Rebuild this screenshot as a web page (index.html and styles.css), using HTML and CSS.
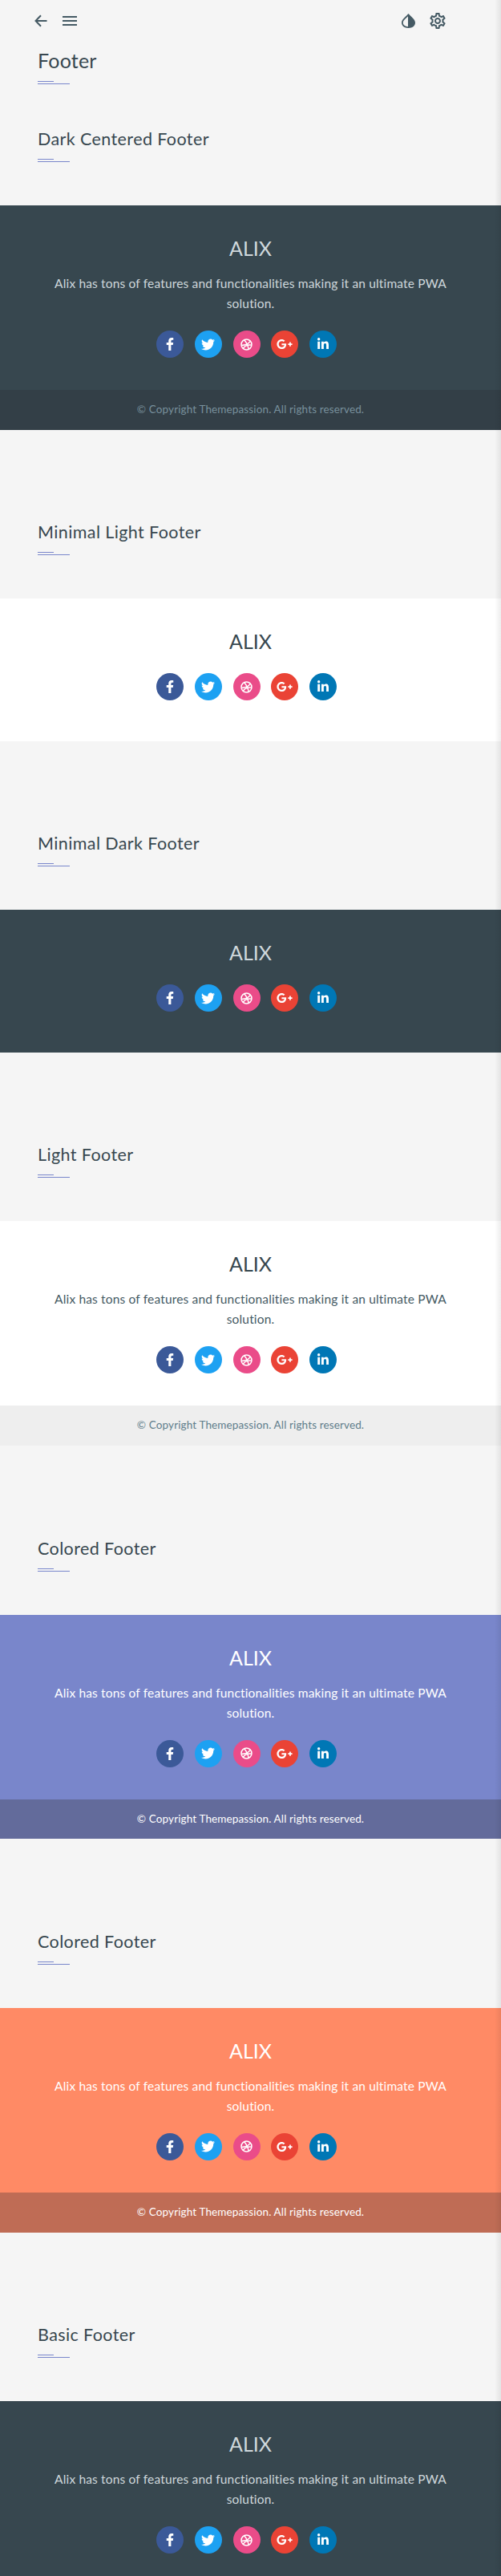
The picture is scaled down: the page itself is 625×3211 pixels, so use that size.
FILE: index.html
```html
<!DOCTYPE html>
<html lang="en">
<head>
<meta charset="utf-8">
<title>Footer</title>
<link rel="stylesheet" href="styles.css">
</head>
<body>
<svg class="defs" aria-hidden="true">
  <symbol id="i-fb" viewBox="0 0 320 512"><path d="M279.14 288l14.22-92.66h-88.91v-60.13c0-25.35 12.42-50.06 52.24-50.06h40.42V6.26S260.43 0 225.36 0c-73.22 0-121.08 44.38-121.08 124.72v70.62H22.89V288h81.39v224h100.17V288z"/></symbol>
  <symbol id="i-tw" viewBox="0 0 512 512"><path d="M459.37 151.716c.325 4.548.325 9.097.325 13.645 0 138.72-105.583 298.558-298.558 298.558-59.452 0-114.68-17.219-161.137-47.106 8.447.974 16.568 1.299 25.34 1.299 49.055 0 94.213-16.568 130.274-44.832-46.132-.975-84.792-31.188-98.112-72.772 6.498.974 12.995 1.624 19.818 1.624 9.421 0 18.843-1.3 27.614-3.573-48.081-9.747-84.143-51.98-84.143-102.985v-1.299c13.969 7.797 30.214 12.67 47.431 13.319-28.264-18.843-46.781-51.005-46.781-87.391 0-19.492 5.197-37.36 14.294-52.954 51.655 63.675 129.3 105.258 216.365 109.807-1.624-7.797-2.599-15.918-2.599-24.04 0-57.828 46.782-104.934 104.934-104.934 30.213 0 57.502 12.67 76.67 33.137 23.715-4.548 46.456-13.32 66.599-25.34-7.798 24.366-24.366 44.833-46.132 57.827 21.117-2.273 41.584-8.122 60.426-16.243-14.292 20.791-32.161 39.308-52.628 54.253z"/></symbol>
  <symbol id="i-dr" viewBox="0 0 24 24"><g fill="none" stroke="currentColor" stroke-width="2.4"><circle cx="12" cy="12" r="10.4"/><path d="M7.6 2.8c4 4.600 7.600 11.600 9 19.600"/><path d="M2 13.500c7.500 0 14-2.600 17.800-8.400"/><path d="M5 20c3-5 8.500-8.200 17.200-7"/></g></symbol>
  <symbol id="i-gp" viewBox="0 0 640 512"><path d="M386.061 228.496c1.834 9.692 3.143 19.384 3.143 31.956C389.204 370.205 315.599 448 204.8 448c-106.084 0-192-85.915-192-192s85.916-192 192-192c51.864 0 95.083 18.859 128.611 50.292l-52.126 50.03c-14.145-13.621-39.028-29.599-76.485-29.599-65.484 0-118.92 54.221-118.92 121.277 0 67.056 53.436 121.277 118.92 121.277 75.961 0 104.513-54.745 108.965-82.773H204.8v-66.009h181.261zm185.406 6.437V179.2h-56.001v55.733h-55.733v56.001h55.733v55.733h56.001v-55.733H627.2v-56.001h-55.733z"/></symbol>
  <symbol id="i-in" viewBox="0 0 448 512"><path d="M100.28 448H7.4V148.9h92.88zM53.79 108.1C24.09 108.1 0 83.5 0 53.8a53.79 53.79 0 0 1 107.58 0c0 29.7-24.1 54.3-53.79 54.3zM447.9 448h-92.68V302.4c0-34.7-.7-79.2-48.29-79.2-48.29 0-55.69 37.7-55.69 76.7V448h-92.78V148.9h89.08v40.8h1.3c12.4-23.5 42.69-48.3 87.88-48.3 94 0 111.28 61.9 111.28 142.3V448z"/></symbol>
</svg>

<div class="page">
  <nav class="topbar">
    <div class="topbar-group">
      <svg class="nav-icon nav-back" viewBox="0 0 16 16"><path d="M15.500 8H1.500M8 1.200L1.500 8 8 14.800"/></svg>
      <svg class="nav-icon nav-menu" viewBox="0 0 18 12"><path d="M0 1h18M0 6h18M0 11h18"/></svg>
    </div>
    <div class="topbar-group topbar-right">
      <svg class="nav-drop" viewBox="0 0 17 18"><path fill-rule="evenodd" d="M8.500 0C5.500 3.500 0 7 0 11.500 0 15.200 3.800 18 8.500 18S17 15.200 17 11.500C17 7 11.500 3.500 8.500 0zM8 3.200C6 5.600 1.800 8 1.800 11.500c0 2.600 2.700 4.600 6.200 4.700z"/></svg>
      <svg class="nav-gear" viewBox="2 2 20 20"><path d="M19.430 12.980c.04-.32.07-.64.07-.98 0-.34-.03-.66-.07-.98l2.110-1.650c.19-.15.24-.42.12-.64l-2-3.460c-.09-.16-.26-.25-.44-.25-.06 0-.12.01-.17.03l-2.490 1c-.52-.4-1.080-.73-1.690-.98l-.38-2.650C14.460 2.180 14.250 2 14 2h-4c-.25 0-.46.18-.49.42l-.38 2.650c-.61.25-1.170.59-1.690.98l-2.490-1c-.06-.02-.12-.03-.18-.03-.17 0-.34.09-.43.25l-2 3.460c-.13.22-.07.49.12.64l2.110 1.650c-.04.32-.07.65-.07.98 0 .33.03.66.07.98l-2.110 1.650c-.19.15-.24.42-.12.64l2 3.460c.09.16.26.25.44.25.06 0 .12-.01.17-.03l2.490-1c.52.4 1.080.73 1.690.98l.38 2.650c.03.24.24.42.49.42h4c.25 0 .46-.18.49-.42l.38-2.650c.61-.25 1.170-.59 1.690-.98l2.490 1c.06.02.12.03.18.03.17 0 .34-.09.43-.25l2-3.460c.12-.22.07-.49-.12-.64l-2.110-1.650zm-1.980-1.710c.04.31.05.52.05.73 0 .21-.02.43-.05.73l-.14 1.130.89.7 1.080.84-.7 1.210-1.270-.51-1.040-.42-.9.68c-.43.32-.84.56-1.250.73l-1.060.43-.16 1.130-.2 1.350h-1.400l-.19-1.350-.16-1.130-1.060-.43c-.43-.18-.83-.41-1.230-.71l-.91-.7-1.060.43-1.270.51-.7-1.210 1.080-.84.89-.7-.14-1.130c-.03-.31-.05-.54-.05-.74s.02-.43.05-.73l.14-1.130-.89-.7-1.080-.84.7-1.210 1.270.51 1.040.42.9-.68c.43-.32.84-.56 1.250-.73l1.060-.43.16-1.130.2-1.350h1.390l.19 1.350.16 1.130 1.060.43c.43.18.83.41 1.230.71l.91.7 1.060-.43 1.270-.51.7 1.210-1.070.85-.89.7.14 1.130zM12 8c-2.210 0-4 1.790-4 4s1.790 4 4 4 4-1.790 4-4-1.790-4-4-4zm0 6c-1.100 0-2-.9-2-2s.9-2 2-2 2 .9 2 2-.9 2-2 2z"/></svg>
    </div>
  </nav>

  <header class="page-title">
    <h1>Footer</h1>
    <div class="rule"></div>
  </header>

  <section class="demo-head demo-head-first">
    <h2>Dark Centered Footer</h2>
    <div class="rule"></div>
  </section>
  <footer class="foot foot-dark">
    <div class="foot-main">
      <h3>ALIX</h3>
      <p>Alix has tons of features and functionalities making it an ultimate PWA solution.</p>
      <div class="social">
        <a class="soc soc-fb"><svg class="g-fb"><use href="#i-fb"/></svg></a>
        <a class="soc soc-tw"><svg class="g-tw"><use href="#i-tw"/></svg></a>
        <a class="soc soc-dr"><svg class="g-dr"><use href="#i-dr"/></svg></a>
        <a class="soc soc-gp"><svg class="g-gp"><use href="#i-gp"/></svg></a>
        <a class="soc soc-in"><svg class="g-in"><use href="#i-in"/></svg></a>
      </div>
    </div>
    <div class="foot-bar">© Copyright Themepassion. All rights reserved.</div>
  </footer>

  <section class="demo-head">
    <h2>Minimal Light Footer</h2>
    <div class="rule"></div>
  </section>
  <footer class="foot foot-light foot-min">
    <div class="foot-main">
      <h3>ALIX</h3>
      <div class="social">
        <a class="soc soc-fb"><svg class="g-fb"><use href="#i-fb"/></svg></a>
        <a class="soc soc-tw"><svg class="g-tw"><use href="#i-tw"/></svg></a>
        <a class="soc soc-dr"><svg class="g-dr"><use href="#i-dr"/></svg></a>
        <a class="soc soc-gp"><svg class="g-gp"><use href="#i-gp"/></svg></a>
        <a class="soc soc-in"><svg class="g-in"><use href="#i-in"/></svg></a>
      </div>
    </div>
  </footer>

  <section class="demo-head">
    <h2>Minimal Dark Footer</h2>
    <div class="rule"></div>
  </section>
  <footer class="foot foot-dark foot-min">
    <div class="foot-main">
      <h3>ALIX</h3>
      <div class="social">
        <a class="soc soc-fb"><svg class="g-fb"><use href="#i-fb"/></svg></a>
        <a class="soc soc-tw"><svg class="g-tw"><use href="#i-tw"/></svg></a>
        <a class="soc soc-dr"><svg class="g-dr"><use href="#i-dr"/></svg></a>
        <a class="soc soc-gp"><svg class="g-gp"><use href="#i-gp"/></svg></a>
        <a class="soc soc-in"><svg class="g-in"><use href="#i-in"/></svg></a>
      </div>
    </div>
  </footer>

  <section class="demo-head">
    <h2>Light Footer</h2>
    <div class="rule"></div>
  </section>
  <footer class="foot foot-light">
    <div class="foot-main">
      <h3>ALIX</h3>
      <p>Alix has tons of features and functionalities making it an ultimate PWA solution.</p>
      <div class="social">
        <a class="soc soc-fb"><svg class="g-fb"><use href="#i-fb"/></svg></a>
        <a class="soc soc-tw"><svg class="g-tw"><use href="#i-tw"/></svg></a>
        <a class="soc soc-dr"><svg class="g-dr"><use href="#i-dr"/></svg></a>
        <a class="soc soc-gp"><svg class="g-gp"><use href="#i-gp"/></svg></a>
        <a class="soc soc-in"><svg class="g-in"><use href="#i-in"/></svg></a>
      </div>
    </div>
    <div class="foot-bar">© Copyright Themepassion. All rights reserved.</div>
  </footer>

  <section class="demo-head">
    <h2>Colored Footer</h2>
    <div class="rule"></div>
  </section>
  <footer class="foot foot-indigo">
    <div class="foot-main">
      <h3>ALIX</h3>
      <p>Alix has tons of features and functionalities making it an ultimate PWA solution.</p>
      <div class="social">
        <a class="soc soc-fb"><svg class="g-fb"><use href="#i-fb"/></svg></a>
        <a class="soc soc-tw"><svg class="g-tw"><use href="#i-tw"/></svg></a>
        <a class="soc soc-dr"><svg class="g-dr"><use href="#i-dr"/></svg></a>
        <a class="soc soc-gp"><svg class="g-gp"><use href="#i-gp"/></svg></a>
        <a class="soc soc-in"><svg class="g-in"><use href="#i-in"/></svg></a>
      </div>
    </div>
    <div class="foot-bar">© Copyright Themepassion. All rights reserved.</div>
  </footer>

  <section class="demo-head">
    <h2>Colored Footer</h2>
    <div class="rule"></div>
  </section>
  <footer class="foot foot-orange">
    <div class="foot-main">
      <h3>ALIX</h3>
      <p>Alix has tons of features and functionalities making it an ultimate PWA solution.</p>
      <div class="social">
        <a class="soc soc-fb"><svg class="g-fb"><use href="#i-fb"/></svg></a>
        <a class="soc soc-tw"><svg class="g-tw"><use href="#i-tw"/></svg></a>
        <a class="soc soc-dr"><svg class="g-dr"><use href="#i-dr"/></svg></a>
        <a class="soc soc-gp"><svg class="g-gp"><use href="#i-gp"/></svg></a>
        <a class="soc soc-in"><svg class="g-in"><use href="#i-in"/></svg></a>
      </div>
    </div>
    <div class="foot-bar">© Copyright Themepassion. All rights reserved.</div>
  </footer>

  <section class="demo-head">
    <h2>Basic Footer</h2>
    <div class="rule"></div>
  </section>
  <footer class="foot foot-dark">
    <div class="foot-main">
      <h3>ALIX</h3>
      <p>Alix has tons of features and functionalities making it an ultimate PWA solution.</p>
      <div class="social">
        <a class="soc soc-fb"><svg class="g-fb"><use href="#i-fb"/></svg></a>
        <a class="soc soc-tw"><svg class="g-tw"><use href="#i-tw"/></svg></a>
        <a class="soc soc-dr"><svg class="g-dr"><use href="#i-dr"/></svg></a>
        <a class="soc soc-gp"><svg class="g-gp"><use href="#i-gp"/></svg></a>
        <a class="soc soc-in"><svg class="g-in"><use href="#i-in"/></svg></a>
      </div>
    </div>
  </footer>

  <div class="edge-shadow"></div>
</div>
</body>
</html>
```
FILE: styles.css
```css
* { box-sizing: border-box; }
html, body { margin: 0; padding: 0; }
body {
  background: #f5f5f5;
  color: #37474f;
  font-family: "Lato", "Liberation Sans", sans-serif;
}
.defs { display: none; }
.page {
  position: relative;
  width: 625px;
  height: 3211px;
  overflow: hidden;
}
.edge-shadow {
  position: absolute;
  top: 0;
  right: 0;
  bottom: 0;
  width: 8px;
  background: linear-gradient(to right, rgba(0,0,0,0), rgba(0,0,0,0.07));
}

/* top bar */
.topbar {
  display: flex;
  justify-content: space-between;
  align-items: center;
  height: 52px;
  padding: 0 69px 0 43px;
}
.topbar-group { display: flex; align-items: center; gap: 19px; }
.topbar-right { gap: 18px; }
.nav-icon { fill: none; stroke: #455a64; stroke-width: 2; }
.nav-back { width: 16px; height: 16px; }
.nav-menu { width: 18px; height: 12px; }
.nav-drop { width: 17px; height: 18px; fill: #455a64; }
.nav-gear { width: 20px; height: 20px; fill: #455a64; }

/* headings */
h1, h2, h3, p { margin: 0; font-weight: 400; }
.page-title { padding: 8px 47px 0; }
.page-title h1 { font-size: 25px; line-height: 30px; letter-spacing: 0.2px; }
.page-title .rule { margin-top: 11px; }
.demo-head { padding: 114.67px 47px 54px; }
.demo-head-first { padding-top: 55px; }
.demo-head h2 { font-size: 21.5px; line-height: 26px; letter-spacing: 0.4px; }
.demo-head .rule { margin-top: 12px; }
.rule::before, .rule::after {
  content: "";
  display: block;
  height: 1px;
  background: #7986cb;
}
.rule::before { width: 20px; margin-bottom: 2px; }
.rule::after { width: 40px; }

/* footers */
.foot { text-align: center; }
.foot-main { height: 230px; padding-top: 37px; }
.foot-min .foot-main { height: 177.33px; }
.foot h3 { font-size: 25px; line-height: 32px; height: 32px; }
.foot p {
  width: 510px;
  margin: 16px auto 0;
  font-size: 15.5px;
  line-height: 25px;
  letter-spacing: 0.16px;
}
.social {
  display: flex;
  justify-content: center;
  gap: 13.75px;
  margin-top: 21px;
  padding-right: 10px;
}
.foot-min .social { margin-top: 24px; }
.soc {
  display: flex;
  align-items: center;
  justify-content: center;
  width: 34px;
  height: 34px;
  border-radius: 50%;
  color: #fff;
  fill: #fff;
}
.soc-fb { background: #3b5998; }
.soc-tw { background: #1da1f2; }
.soc-dr { background: #ea4c89; }
.soc-gp { background: #ea4335; }
.soc-in { background: #0077b5; }
.g-fb { width: 10px; height: 16px; }
.g-tw { width: 17px; height: 17px; }
.g-dr { width: 15px; height: 15px; }
.g-gp { width: 20px; height: 16px; }
.g-in { width: 14px; height: 16px; }

.foot-bar {
  height: 49.67px;
  font-size: 13.5px;
  line-height: 48px;
  letter-spacing: 0.13px;
}
.foot-dark { background: #37474f; color: #cfd8dc; }
.foot-dark .foot-bar { background: #333f47; color: #78909c; }
.foot-light { background: #fff; color: #37474f; }
.foot-light p { color: #455a64; }
.foot-light .foot-bar { background: #eeeeee; color: #607d8b; }
.foot-indigo { background: #7986cb; color: #fff; }
.foot-indigo .foot-bar { background: #636b9b; }
.foot-orange { background: #ff8a65; color: #fff; }
.foot-orange .foot-bar { background: #bf6c55; }
```
